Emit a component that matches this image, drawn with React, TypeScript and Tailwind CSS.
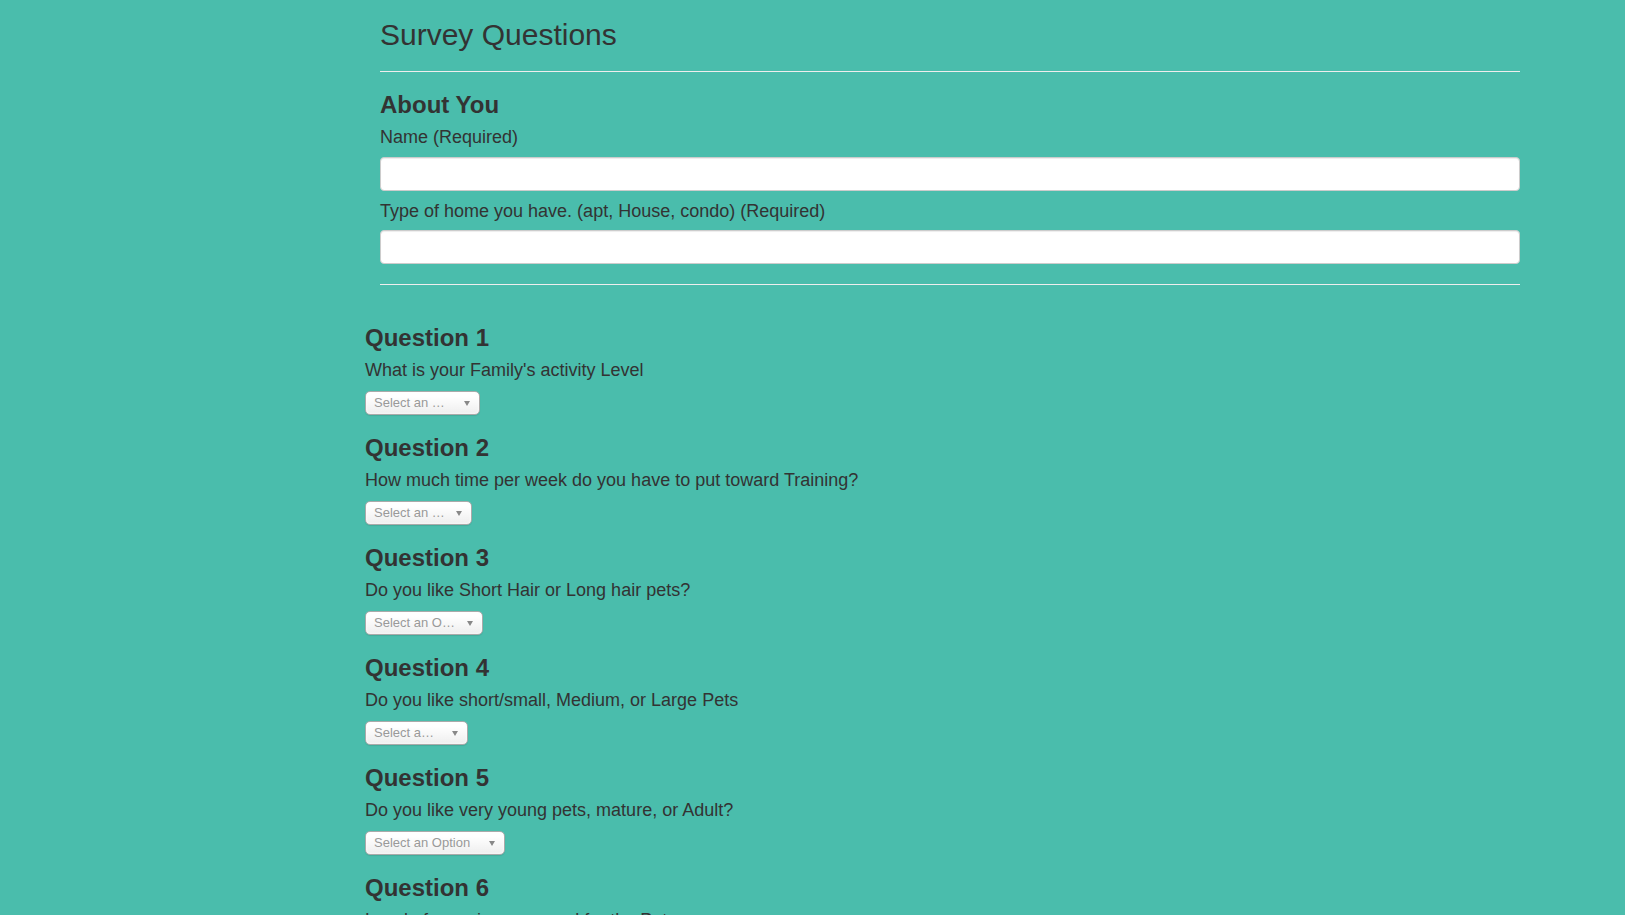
import React from 'react';

const questions = [
  { text: "What is your Family's activity Level", label: 'Select an …', width: 'w-[115px]' },
  { text: 'How much time per week do you have to put toward Training?', label: 'Select an …', width: 'w-[107px]' },
  { text: 'Do you like Short Hair or Long hair pets?', label: 'Select an O…', width: 'w-[118px]' },
  { text: 'Do you like short/small, Medium, or Large Pets', label: 'Select a…', width: 'w-[103px]' },
  { text: 'Do you like very young pets, mature, or Adult?', label: 'Select an Option', width: 'w-[140px]' },
  { text: 'Level of exercise you need for the Pet', label: 'Select an Option', width: 'w-[140px]' },
];

function ChosenSelect({ label, width }: { label: string; width: string }) {
  return (
    <div
      className={`${width} mt-[11px] h-[24px] flex items-center justify-between pl-[8px] pr-[9px] rounded-[5px] border border-[#aaa] bg-gradient-to-b from-white from-20% to-[#eee] shadow-[0_0_3px_white_inset,0_1px_1px_rgba(0,0,0,0.1)] cursor-pointer`}
    >
      <span className="text-[13px] leading-[24px] text-[#999] whitespace-nowrap overflow-hidden">{label}</span>
      <span className="w-0 h-0 border-l-[3.5px] border-r-[3.5px] border-t-[5px] border-l-transparent border-r-transparent border-t-[#888]" />
    </div>
  );
}

function Field({ label, first }: { label: string; first?: boolean }) {
  return (
    <>
      <label className={`block ${first ? 'mt-[9px]' : 'mt-[10px]'} text-[18px] leading-[20px]`}>{label}</label>
      <input
        type="text"
        className={`block w-full ${first ? 'mt-[10px]' : 'mt-[9px]'} h-[34px] px-3 rounded-[4px] border border-[#ccc] bg-white shadow-[inset_0_1px_1px_rgba(0,0,0,0.075)] outline-none`}
      />
    </>
  );
}

export default function App() {
  return (
    <div className="min-h-screen bg-[#4abdac] text-[#333] font-['Liberation_Sans',Arial,sans-serif]">
      <div className="ml-[365px] w-[1155px] pb-10">
        <div className="pl-[15px]">
          <h2 className="pt-[18px] text-[30px] leading-[33px] font-normal">Survey Questions</h2>
          <hr className="mt-[20px] border-0 border-t border-[#eee]" />
          <h3 className="mt-[20px] text-[24px] leading-[26px] font-bold">About You</h3>
          <Field label="Name (Required)" first />
          <Field label="Type of home you have. (apt, House, condo) (Required)" />
          <hr className="mt-[20px] border-0 border-t border-[#eee]" />
        </div>

        <div className="pt-[40px]">
          {questions.map((q, i) => (
            <div key={i} className={i > 0 ? 'mt-[20px]' : ''}>
              <h3 className="text-[24px] leading-[26px] font-bold">Question {i + 1}</h3>
              <p className="mt-[9px] text-[18px] leading-[20px]">{q.text}</p>
              <ChosenSelect label={q.label} width={q.width} />
            </div>
          ))}
        </div>
      </div>
    </div>
  );
}
